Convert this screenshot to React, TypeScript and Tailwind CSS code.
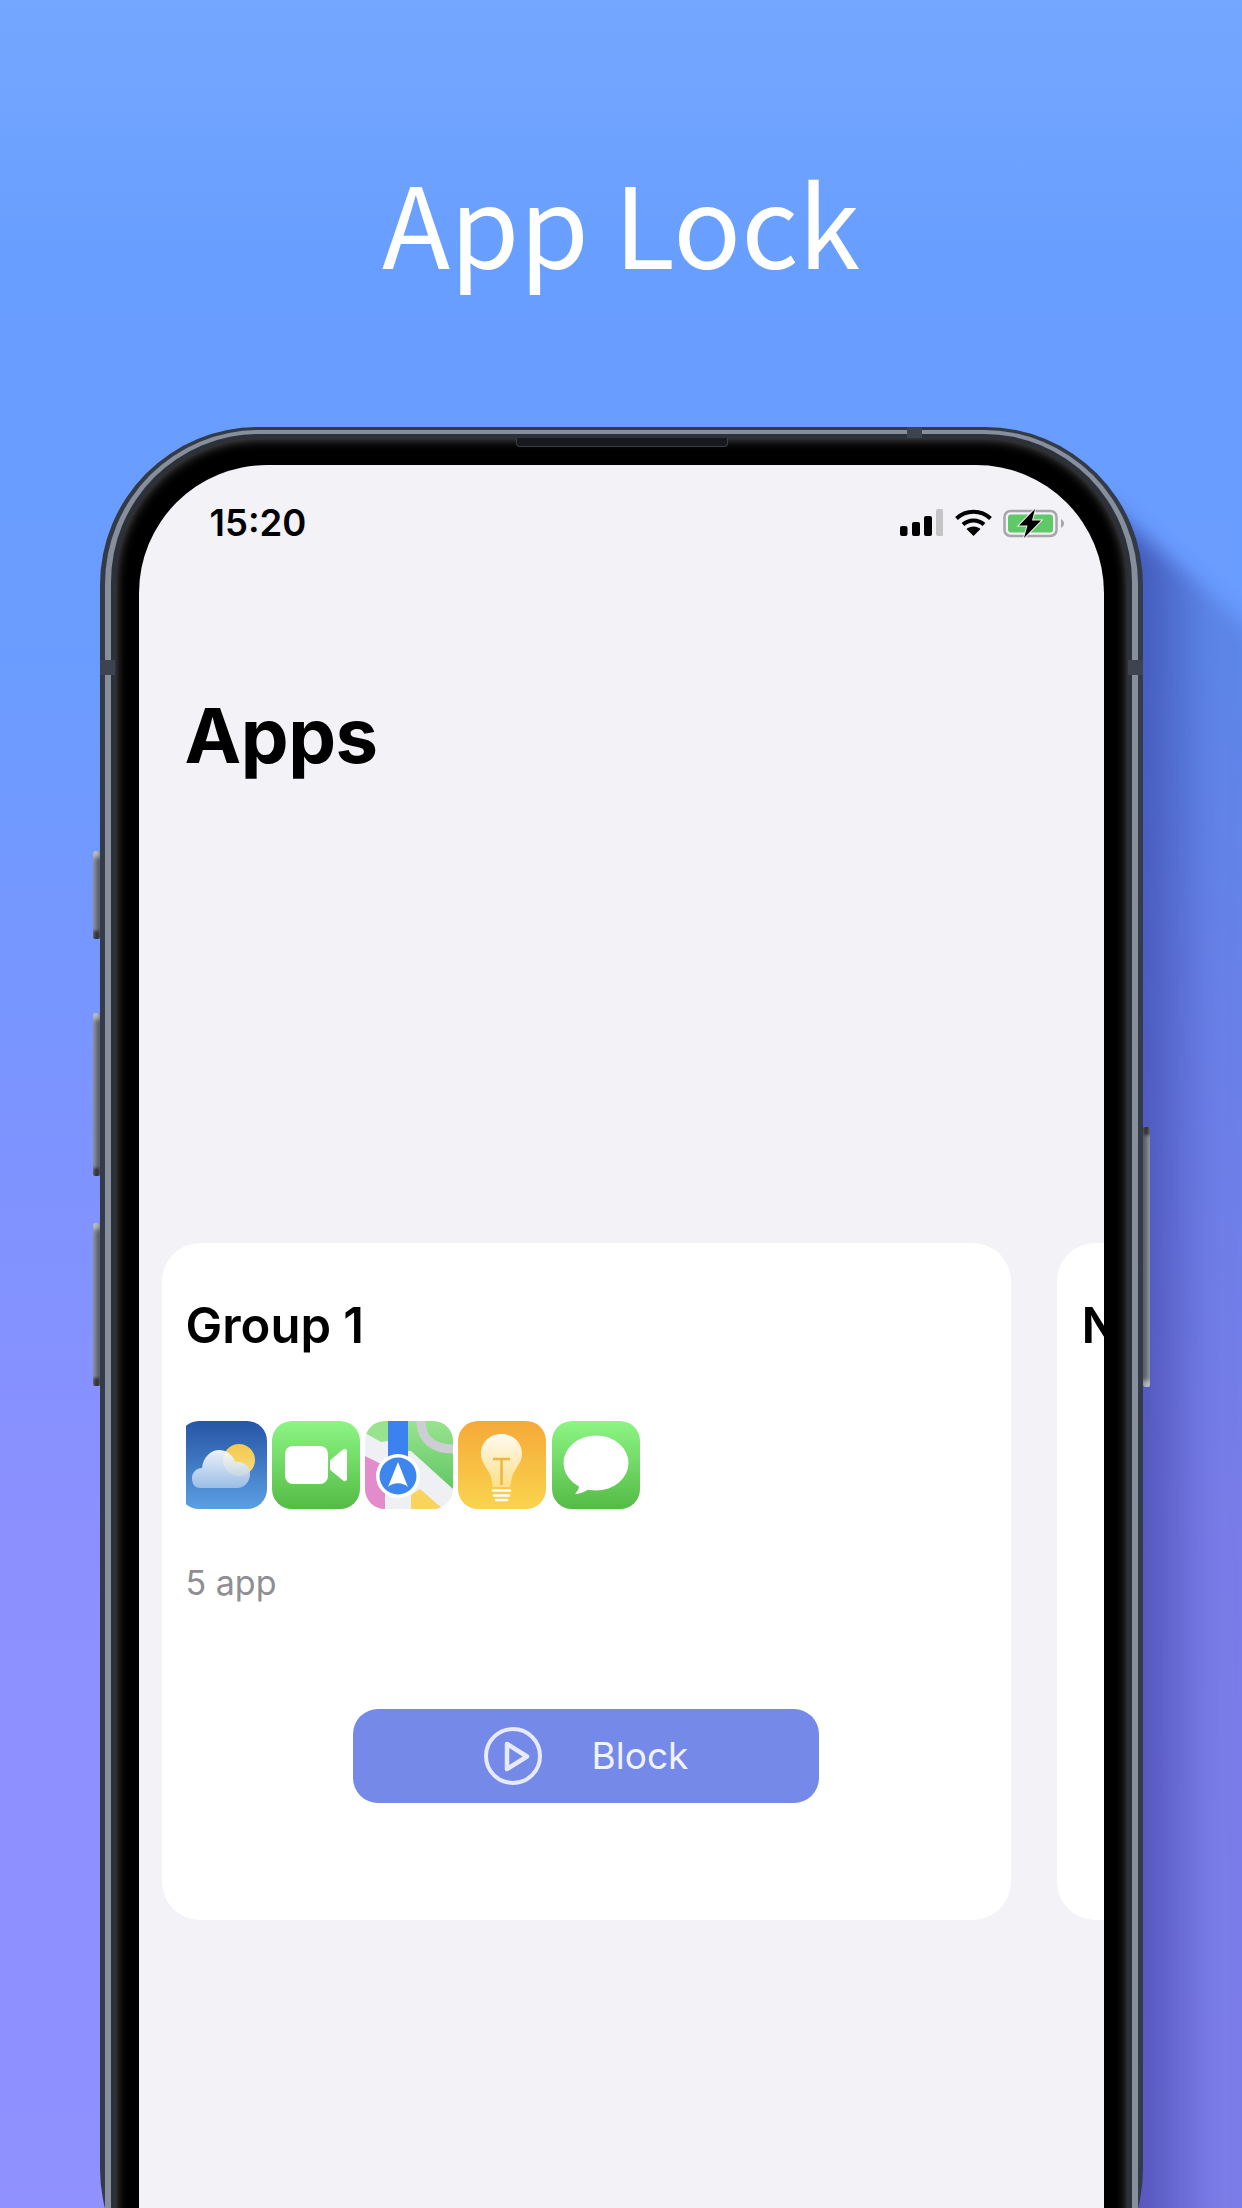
const iconGreen = (id: string) => (
  <linearGradient id={id} x1="0" y1="0" x2="0" y2="1">
    <stop offset="0" stopColor="#8df584" />
    <stop offset="1" stopColor="#54bb45" />
  </linearGradient>
);

function WeatherIcon() {
  return (
    <svg width="88" height="88" viewBox="0 0 88 88" className="shrink-0 -ml-[7px]">
      <defs>
        <linearGradient id="wbg" x1="0" y1="0" x2="0" y2="1">
          <stop offset="0" stopColor="#2655a6" />
          <stop offset="1" stopColor="#5b9fe2" />
        </linearGradient>
        <linearGradient id="wsun" x1="0" y1="0" x2="0" y2="1">
          <stop offset="0" stopColor="#f4c84e" />
          <stop offset="1" stopColor="#f8de7c" />
        </linearGradient>
        <linearGradient id="wcloud" x1="0" y1="0" x2="0" y2="1">
          <stop offset="0" stopColor="#ffffff" />
          <stop offset="1" stopColor="#a3c3e8" />
        </linearGradient>
      </defs>
      <rect width="88" height="88" rx="20" fill="url(#wbg)" />
      <circle cx="60" cy="39" r="16" fill="url(#wsun)" />
      <path
        d="M21 67C14 67 13 60 13 57C13 51 18 47 23 47C24 36 32 29 40 29C48 29 54 34 56 41C64 40 71 45 71 53C71 61 65 67 58 67Z"
        fill="url(#wcloud)"
        fillOpacity="0.9"
      />
    </svg>
  );
}

function FaceTimeIcon() {
  return (
    <svg width="88" height="88" viewBox="0 0 88 88" className="shrink-0">
      <defs>{iconGreen("ftbg")}</defs>
      <rect width="88" height="88" rx="20" fill="url(#ftbg)" />
      <rect x="13" y="25" width="43" height="38" rx="8" fill="#fff" />
      <path
        d="M59 38.500L71 28.500C73 27 75 28 75 30.500V57.500C75 60 73 61 71 59.500L59 49.500C58.300 49 58 48 58 47V41C58 40 58.300 39 59 38.500Z"
        fill="#fff"
      />
    </svg>
  );
}

function MapsIcon() {
  return (
    <svg width="88" height="88" viewBox="0 0 88 88" className="shrink-0">
      <defs>
        <clipPath id="mclip">
          <rect width="88" height="88" rx="20" />
        </clipPath>
        <linearGradient id="mgreen" x1="0" y1="0" x2="0" y2="1">
          <stop offset="0" stopColor="#98e48e" />
          <stop offset="1" stopColor="#62c765" />
        </linearGradient>
      </defs>
      <g clipPath="url(#mclip)">
        <rect width="88" height="88" fill="#eff0f4" />
        <path d="M43 0H88V68L46 30H43Z" fill="url(#mgreen)" />
        <path d="M0 0H23V20L16 21L0 12Z" fill="#99e38f" />
        <path d="M0 35L20 45V88H0Z" fill="#e28ccb" />
        <path d="M46 88V74L55 68L78 88Z" fill="#f8d45c" />
        <path d="M56 0C56 18 68 28 88 28" fill="none" stroke="#cdced4" strokeWidth="9" />
        <rect x="23" y="0" width="20" height="36" fill="#3b82f0" />
        <circle cx="33" cy="55" r="22" fill="#ffffff" />
        <circle cx="33" cy="55" r="18.500" fill="#3d86ee" />
        <path d="M33 41L43 66C38 61 28 61 23 66Z" fill="#fff" />
      </g>
    </svg>
  );
}

function TipsIcon() {
  return (
    <svg width="88" height="88" viewBox="0 0 88 88" className="shrink-0">
      <defs>
        <linearGradient id="tbg" x1="0" y1="0" x2="0" y2="1">
          <stop offset="0" stopColor="#f5a938" />
          <stop offset="1" stopColor="#fad44e" />
        </linearGradient>
        <linearGradient id="tbulb" x1="0" y1="0" x2="0" y2="1">
          <stop offset="0" stopColor="#fffaf0" />
          <stop offset="1" stopColor="#fbe08a" />
        </linearGradient>
      </defs>
      <rect width="88" height="88" rx="20" fill="url(#tbg)" />
      <path
        d="M43.500 13C31 13 23 22 23 33C23 42 30 47 33 56C34 60 34 63 35 66H52C53 63 53 60 54 56C57 47 64 42 64 33C64 22 56 13 43.500 13Z"
        fill="url(#tbulb)"
      />
      <path d="M35 38H52M43.500 38V64" stroke="#f3b440" strokeWidth="2.500" fill="none" />
      <path d="M35 69.500H52M36 74.500H51M38 79H49" stroke="#fff" strokeWidth="2.600" fill="none" strokeLinecap="round" />
    </svg>
  );
}

function MessagesIcon() {
  return (
    <svg width="88" height="88" viewBox="0 0 88 88" className="shrink-0">
      <defs>{iconGreen("msbg")}</defs>
      <rect width="88" height="88" rx="20" fill="url(#msbg)" />
      <ellipse cx="44" cy="42" rx="32.500" ry="27.500" fill="#fff" />
      <path d="M27 60C28 66 26 70 23 73C29 73 35 70 39 66Z" fill="#fff" />
    </svg>
  );
}

function StatusIcons() {
  return (
    <div className="flex items-start">
      <svg width="43" height="27" viewBox="0 0 43 27">
        <rect x="0" y="17" width="7.500" height="10" rx="2" fill="#000" />
        <rect x="12" y="13" width="8" height="14" rx="2" fill="#000" />
        <rect x="24" y="7" width="8" height="20" rx="2" fill="#000" />
        <rect x="36" y="0" width="7.500" height="27" rx="2" fill="#c4c4c7" />
      </svg>
      <svg width="37" height="27" viewBox="0 0 37 27" className="ml-[12px]">
        <path d="M1.500 9.500C11 0.500 26 0.500 35.500 9.500" fill="none" stroke="#000" strokeWidth="4" />
        <path d="M8 15.500C14 10 23 10 29 15.500" fill="none" stroke="#000" strokeWidth="4" />
        <path d="M18.500 27L11.500 20C15 16.500 22 16.500 25.500 20Z" fill="#000" />
      </svg>
      <svg width="61" height="29" viewBox="0 0 61 29" className="ml-[11px]">
        <rect x="1.500" y="2" width="52" height="25" rx="6" fill="none" stroke="#a7a7a9" strokeWidth="2.500" />
        <rect x="5" y="5.500" width="45" height="18" rx="3" fill="#5fc968" />
        <path d="M58 10C60 11 61 13 61 14.500C61 16 60 18 58 19Z" fill="#a7a7a9" />
        <path
          d="M32 0L16 16.500H24.500L21 29L38 11.500H29Z"
          fill="#000"
          stroke="#f2f2f7"
          strokeWidth="2"
          paintOrder="stroke"
        />
      </svg>
    </div>
  );
}

function SideButton({ className }: { className: string }) {
  return (
    <div
      className={`absolute w-[7px] rounded-[2px] bg-[linear-gradient(90deg,#8f95a1,#3c4452)] shadow-[inset_0_6px_4px_rgba(255,255,255,0.5),inset_0_-8px_3px_rgba(0,0,0,0.6)] ${className}`}
    />
  );
}

function GroupCard() {
  return (
    <div className="w-[849px] h-[677px] shrink-0 rounded-[38px] bg-white flex flex-col">
      <h2 className="mt-[55px] ml-[24px] text-[49px] leading-[56px] font-semibold text-black">Group 1</h2>
      <div className="mt-[67px] ml-[24px] mr-[24px] flex gap-[5.300px] overflow-hidden">
        <WeatherIcon />
        <FaceTimeIcon />
        <MapsIcon />
        <TipsIcon />
        <MessagesIcon />
      </div>
      <p className="mt-[54px] ml-[24px] text-[34px] leading-[40px] text-[#8e8e93]">5 app</p>
      <button className="mt-[106px] mx-auto w-[466px] h-[94px] rounded-[25px] bg-[#7589e9] flex items-center justify-center gap-[50px]">
        <svg width="58" height="58" viewBox="0 0 58 58">
          <circle cx="29" cy="29" r="27" fill="none" stroke="#e6eafb" strokeWidth="4" />
          <path d="M23 17L43 29.500L23 42Z" fill="none" stroke="#e6eafb" strokeWidth="4.500" strokeLinejoin="round" />
        </svg>
        <span className="text-[37px] leading-[46px] text-[#f0f2fd]">Block</span>
      </button>
    </div>
  );
}

export default function App() {
  return (
    <div className="relative w-[1242px] h-[2208px] overflow-hidden flex flex-col items-center font-['Inter',sans-serif] bg-[linear-gradient(180deg,#74a7ff_0%,#689eff_12%,#6a9cff_30%,#7c94ff_50%,#8c90ff_70%,#9090ff_100%)]">
      {/* long shadow the phone throws to the right */}
      <div className="absolute left-[1100px] top-[499px] w-[180px] h-[1760px] blur-[10px]">
        <div className="w-full h-full [clip-path:polygon(0_0,180px_155px,180px_100%,0_100%)] bg-[linear-gradient(90deg,rgba(35,35,130,0.52)_24%,rgba(35,35,130,0.2)_60%,rgba(35,35,130,0.15)_100%)]" />
      </div>

      <h1 className="mt-[160px] h-[120px] text-[112px] leading-[120px] font-normal text-white font-['Noto_Sans_CJK_SC','Noto_Sans',sans-serif]">
        App Lock
      </h1>

      {/* phone frame */}
      <div className="relative mt-[147px] w-[1043px] h-[1900px] shrink-0 rounded-[158px] bg-[#343b48] pt-[3px] px-[5px]">
        <SideButton className="left-[-7px] top-[424px] h-[88px]" />
        <SideButton className="left-[-7px] top-[586px] h-[163px]" />
        <SideButton className="left-[-7px] top-[796px] h-[163px]" />
        <SideButton className="right-[-7px] top-[700px] h-[260px] rotate-180" />

        <div className="h-full rounded-t-[154px] bg-[#878e9c] pt-[4px] px-[6px]">
          <div className="h-full rounded-t-[148px] bg-[#2c323c] pt-[4px] px-[4px]">
            <div className="relative h-full rounded-t-[144px] bg-black pt-[27px] px-[24px] shadow-[inset_0_0_12px_rgba(120,120,120,0.9)]">
              <div className="absolute left-[401px] top-0 w-[212px] h-[9px] rounded-b-[4px] bg-[#17191e] border-x border-b border-[#3a3d44]" />

              {/* screen */}
              <div className="h-full rounded-t-[128px] bg-[#f2f2f7] overflow-hidden flex flex-col">
                <div className="mt-[44px] pl-[71px] pr-[40px] h-[29px] flex items-start justify-between">
                  <span className="text-[36.500px] leading-[29px] font-semibold text-black">15:20</span>
                  <StatusIcons />
                </div>

                <h1 className="mt-[152px] ml-[46px] text-[76px] leading-[90px] font-bold tracking-[-0.5px] text-black">Apps</h1>

                <div className="mt-[463px] pl-[23px] flex gap-[46px]">
                  <GroupCard />
                  <div className="w-[849px] h-[677px] shrink-0 rounded-[38px] bg-white">
                    <h2 className="mt-[55px] ml-[25px] text-[49px] leading-[56px] font-semibold text-black">New</h2>
                  </div>
                </div>
              </div>
            </div>
          </div>
        </div>

        {/* antenna bands */}
        <div className="absolute left-0 top-[233px] w-[15px] h-[15px] bg-[#3d444f]" />
        <div className="absolute right-0 top-[233px] w-[15px] h-[15px] bg-[#3d444f]" />
        <div className="absolute left-[807px] top-0 w-[15px] h-[11px] bg-[#3d444f]" />
      </div>
    </div>
  );
}
